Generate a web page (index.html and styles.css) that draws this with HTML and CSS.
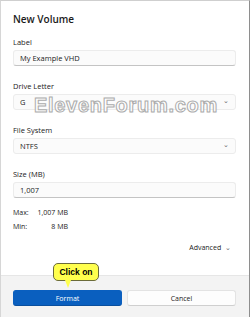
FILE: index.html
```html
<!DOCTYPE html>
<html>
<head>
  <meta charset="UTF-8">
  <title>New Volume</title>
  <link rel="stylesheet" href="styles.css">
</head>
<body>
  <div class="dialog">
    <div class="content">
      <h1>New Volume</h1>

      <div class="field">
        <label>Label</label>
        <div class="input text">My Example VHD</div>
      </div>

      <div class="field">
        <label>Drive Letter</label>
        <div class="input select">G <span class="chev">&#8964;</span></div>
      </div>

      <div class="field">
        <label>File System</label>
        <div class="input select">NTFS <span class="chev">&#8964;</span></div>
      </div>

      <div class="field">
        <label>Size (MB)</label>
        <div class="input text">1,007</div>
      </div>

      <div class="limits">
        <div class="limit"><span class="key">Max:</span><span class="val">1,007 MB</span></div>
        <div class="limit"><span class="key">Min:</span><span class="val">8 MB</span></div>
      </div>

      <div class="advanced">Advanced <span class="chev">&#8964;</span></div>
    </div>

    <div class="footer">
      <button class="btn primary">Format</button>
      <button class="btn">Cancel</button>
      <div class="callout">Click on</div>
    </div>

    <div class="watermark">ElevenForum.com</div>
  </div>
</body>
</html>
```

FILE: styles.css
```css
body {
  margin: 0;
  font-family: "Open Sans", "Noto Sans", sans-serif;
  color: #1b1b1b;
}
.dialog {
  position: relative;
  width: 250px;
  height: 317px;
  box-sizing: border-box;
  border-top: 1px solid #cfcfcf;
  border-left: 1px solid #d6d6d6;
  border-right: 1px solid #8e8e8e;
  background: white;
  display: flex;
  flex-direction: column;
}
.content {
  flex: 1;
  padding: 10px 13px 0 12px;
}
h1 {
  margin: 0 0 8px 0;
  font-size: 10px;
  line-height: 16px;
  font-weight: 600;
}
.field {
  margin-bottom: 13px;
}
label {
  display: block;
  font-size: 7.5px;
  line-height: 14px;
  margin-bottom: 1px;
}
.input {
  height: 16px;
  box-sizing: border-box;
  padding: 0 6px;
  font-size: 7.5px;
  line-height: 15px;
  background: #fbfbfb;
  border: 1px solid #ececec;
  border-radius: 3px;
  display: flex;
  justify-content: space-between;
}
.input.text {
  border-bottom-color: #c4c4c4;
}
.chev {
  font-size: 7px;
  color: #666;
  line-height: 12px;
}
.limits {
  margin-top: -5px;
}
.limit {
  font-size: 7px;
  line-height: 14px;
  display: flex;
  white-space: nowrap;
}
.key {
  width: 22px;
}
.val {
  width: 33px;
  text-align: right;
}
.advanced {
  margin-top: 7px;
  text-align: right;
  padding-right: 5px;
  font-size: 7px;
  line-height: 14px;
}
.advanced .chev {
  margin-left: 2px;
}
.footer {
  position: relative;
  height: 42px;
  box-sizing: border-box;
  padding: 14px 13px 0 12px;
  background: #f3f3f3;
  border-top: 1px solid #e6e6e6;
  display: grid;
  grid-template-columns: 1fr 1fr;
  gap: 5px;
  align-items: start;
}
.btn {
  height: 16px;
  font-family: inherit;
  font-size: 7px;
  border: 1px solid #e3e3e3;
  border-bottom-color: #cfcfcf;
  border-radius: 3px;
  background: #fdfdfd;
  color: #1b1b1b;
  padding: 0;
}
.btn.primary {
  background: #0a5fbf;
  border-color: #0a5fbf;
  border-bottom-color: #0a4f9e;
  color: white;
}
.callout {
  position: absolute;
  left: 52px;
  top: -13px;
  width: 46px;
  height: 18px;
  box-sizing: border-box;
  background: #ffff4d;
  border: 1px solid #6b6b3a;
  border-radius: 5px;
  font-family: "Liberation Sans", Arial, sans-serif;
  font-weight: bold;
  font-size: 8.5px;
  line-height: 16px;
  text-align: center;
  color: black;
}
.callout::after {
  content: "";
  position: absolute;
  left: 11px;
  top: 16px;
  border-left: 3px solid transparent;
  border-right: 3px solid transparent;
  border-top: 8px solid #ffff4d;
}
.watermark {
  position: absolute;
  left: 33px;
  top: 93px;
  font-family: "Liberation Sans", Arial, sans-serif;
  font-weight: bold;
  font-size: 20px;
  line-height: 22px;
  letter-spacing: 0.7px;
  color: white;
  -webkit-text-stroke: 1px #ababab;
  pointer-events: none;
}
```
